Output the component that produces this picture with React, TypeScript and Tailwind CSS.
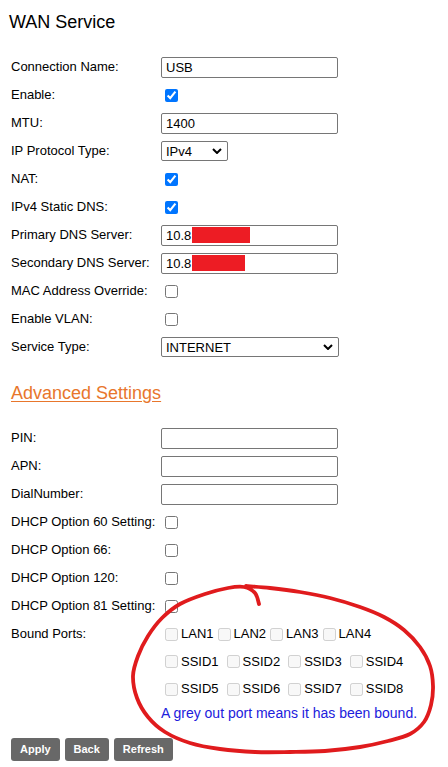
import React from 'react';

type Pt = [number, number];

// red hand-drawn annotation loop around the bound ports
const loop: Pt[] = [
    [259, 604], [255, 593], [244, 587], [228, 588], [205, 594], [180, 604], [162, 618],
    [148, 636], [138, 656], [133, 676], [137, 698], [148, 717], [165, 732], [190, 743],
    [220, 749], [255, 752], [290, 752], [325, 751], [360, 747], [388, 741], [410, 734],
    [424, 722], [431, 705], [433, 686], [430, 666], [420, 647], [404, 630], [384, 617],
    [360, 607], [330, 598], [300, 592], [270, 588], [246, 586],
];

function smoothPath(pts: Pt[]) {
    let d = `M ${pts[0][0]} ${pts[0][1]}`;
    for (let i = 0; i < pts.length - 1; i++) {
        const p0 = pts[i - 1] || pts[i];
        const p1 = pts[i];
        const p2 = pts[i + 1];
        const p3 = pts[i + 2] || p2;
        const c1x = p1[0] + (p2[0] - p0[0]) / 6;
        const c1y = p1[1] + (p2[1] - p0[1]) / 6;
        const c2x = p2[0] - (p3[0] - p1[0]) / 6;
        const c2y = p2[1] - (p3[1] - p1[1]) / 6;
        d += ` C ${c1x} ${c1y}, ${c2x} ${c2y}, ${p2[0]} ${p2[1]}`;
    }
    return d;
}

function Row({ label, children }: { label: string; children?: React.ReactNode }) {
    return (
        <div className="flex items-center h-[28px]">
            <div className="w-[150px] shrink-0">{label}</div>
            <div className="flex items-center">{children}</div>
        </div>
    );
}

function TextBox({ value = '', redact }: { value?: string; redact?: number }) {
    return (
        <div className="relative">
            <input
                type="text"
                defaultValue={value}
                className="w-[177px] h-[21px] border border-[#767676] rounded-[2px] px-[4px] text-[13px] text-black bg-white outline-none"
            />
            {redact ? (
                <div className="absolute top-[2px] left-[31px] h-[16px] bg-[#ed1c24]" style={{ width: redact }} />
            ) : null}
        </div>
    );
}

function Check({ checked, disabled }: { checked?: boolean; disabled?: boolean }) {
    return (
        <input
            type="checkbox"
            defaultChecked={checked}
            disabled={disabled}
            className="w-[13px] h-[13px] ml-[4px] mr-[3px] my-[3px]"
        />
    );
}

function Select({ value, width }: { value: string; width: string }) {
    return (
        <div className={`relative ${width}`}>
            <select
                defaultValue={value}
                className="appearance-none w-full h-[20px] border border-[#767676] rounded-[2px] px-[4px] text-[13px] text-black bg-white outline-none"
            >
                <option>{value}</option>
            </select>
            <svg className="absolute right-[6px] top-[7px] pointer-events-none" width="10" height="6" viewBox="0 0 10 6">
                <path d="M1 1 L5 5 L9 1" fill="none" stroke="#000" strokeWidth="2" />
            </svg>
        </div>
    );
}

export default function App() {
    return (
        <div className="relative min-h-[767px] bg-white text-black text-[13px] font-['Liberation_Sans',Arial,sans-serif] pt-[11px]">
            <h1 className="ml-[9px] text-[18px] leading-[22px] font-normal">WAN Service</h1>

            <div className="ml-[11px] mt-[20px]">
                <Row label="Connection Name:"><TextBox value="USB" /></Row>
                <Row label="Enable:"><Check checked /></Row>
                <Row label="MTU:"><TextBox value="1400" /></Row>
                <Row label="IP Protocol Type:"><Select value="IPv4" width="w-[67px]" /></Row>
                <Row label="NAT:"><Check checked /></Row>
                <Row label="IPv4 Static DNS:"><Check checked /></Row>
                <Row label="Primary DNS Server:"><TextBox value="10.8" redact={58} /></Row>
                <Row label="Secondary DNS Server:"><TextBox value="10.8" redact={53} /></Row>
                <Row label="MAC Address Override:"><Check /></Row>
                <Row label="Enable VLAN:"><Check /></Row>
                <Row label="Service Type:"><Select value="INTERNET" width="w-[178px]" /></Row>
            </div>

            <div className="ml-[11px] mt-[21px] text-[18px] leading-[22px] text-[#e8762c] underline underline-offset-[2px]">
                Advanced Settings
            </div>

            <div className="ml-[11px] mt-[20px]">
                <Row label="PIN:"><TextBox /></Row>
                <Row label="APN:"><TextBox /></Row>
                <Row label="DialNumber:"><TextBox /></Row>
                <Row label="DHCP Option 60 Setting:"><Check /></Row>
                <Row label="DHCP Option 66:"><Check /></Row>
                <Row label="DHCP Option 120:"><Check /></Row>
                <Row label="DHCP Option 81 Setting:"><Check /></Row>

                <div className="flex">
                    <div className="w-[150px] shrink-0 h-[28px] flex items-center">Bound Ports:</div>
                    <div className="flex flex-col">
                        <div className="flex items-center h-[28px]">
                            {['LAN1', 'LAN2', 'LAN3', 'LAN4'].map(p => (
                                <span key={p} className="flex items-center">
                                    <Check disabled />
                                    <span>{p}</span>
                                </span>
                            ))}
                        </div>
                        <div className="flex items-center h-[27px]">
                            {['SSID1', 'SSID2', 'SSID3', 'SSID4'].map(p => (
                                <span key={p} className="flex items-center mr-[4px]">
                                    <Check disabled />
                                    <span>{p}</span>
                                </span>
                            ))}
                        </div>
                        <div className="flex items-center h-[28px]">
                            {['SSID5', 'SSID6', 'SSID7', 'SSID8'].map(p => (
                                <span key={p} className="flex items-center mr-[4px]">
                                    <Check disabled />
                                    <span>{p}</span>
                                </span>
                            ))}
                        </div>
                        <div className="text-[14px] leading-[20px] text-[#2020dc]">A grey out port means it has been bound.</div>
                    </div>
                </div>
            </div>

            <div className="ml-[11px] mt-[15px] flex gap-[5px]">
                {['Apply', 'Back', 'Refresh'].map(b => (
                    <button key={b} className="h-[23px] px-[9px] bg-[#686868] text-white text-[11px] font-bold rounded-[3px]">
                        {b}
                    </button>
                ))}
            </div>

            <svg className="absolute inset-0 pointer-events-none" width="448" height="767" viewBox="0 0 448 767">
                <path d={smoothPath(loop)} fill="none" stroke="#e01b1d" strokeWidth="3.8" strokeLinecap="round" strokeLinejoin="round" />
            </svg>
        </div>
    );
}
